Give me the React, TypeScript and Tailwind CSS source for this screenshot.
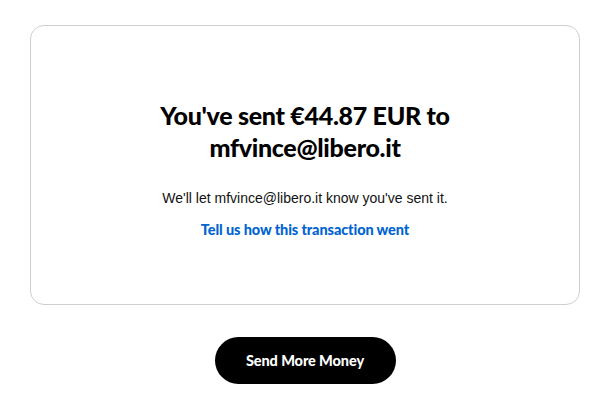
export default function App() {
  return (
    <div className="w-[607px] h-[410px] bg-white pt-[25px] pl-[30px]">
      <div className="w-[550px] border border-[#cfcfcf] rounded-[14px] h-[280px] flex flex-col items-center pt-[73px]">
        <h1 className="text-center text-[25px] leading-[32px] font-black text-black tracking-[-0.3px] font-['Lato',sans-serif] w-[340px]">
          You've sent €44.87 EUR to mfvince@libero.it
        </h1>
        <p className="mt-[26px] text-[14px] leading-[18px] text-[#111] font-['Liberation_Sans',Arial,sans-serif]">
          We'll let mfvince@libero.it know you've sent it.
        </p>
        <a className="mt-[14px] text-[14.5px] leading-[18px] font-black text-[#0064d2] font-['Lato',sans-serif] tracking-[-0.1px]">
          Tell us how this transaction went
        </a>
      </div>
      <div className="w-[550px] flex justify-center mt-[32px]">
        <button className="w-[181px] h-[47px] rounded-full bg-black text-white text-[14.5px] font-black font-['Lato',sans-serif] tracking-[-0.1px]">
          Send More Money
        </button>
      </div>
    </div>
  );
}
